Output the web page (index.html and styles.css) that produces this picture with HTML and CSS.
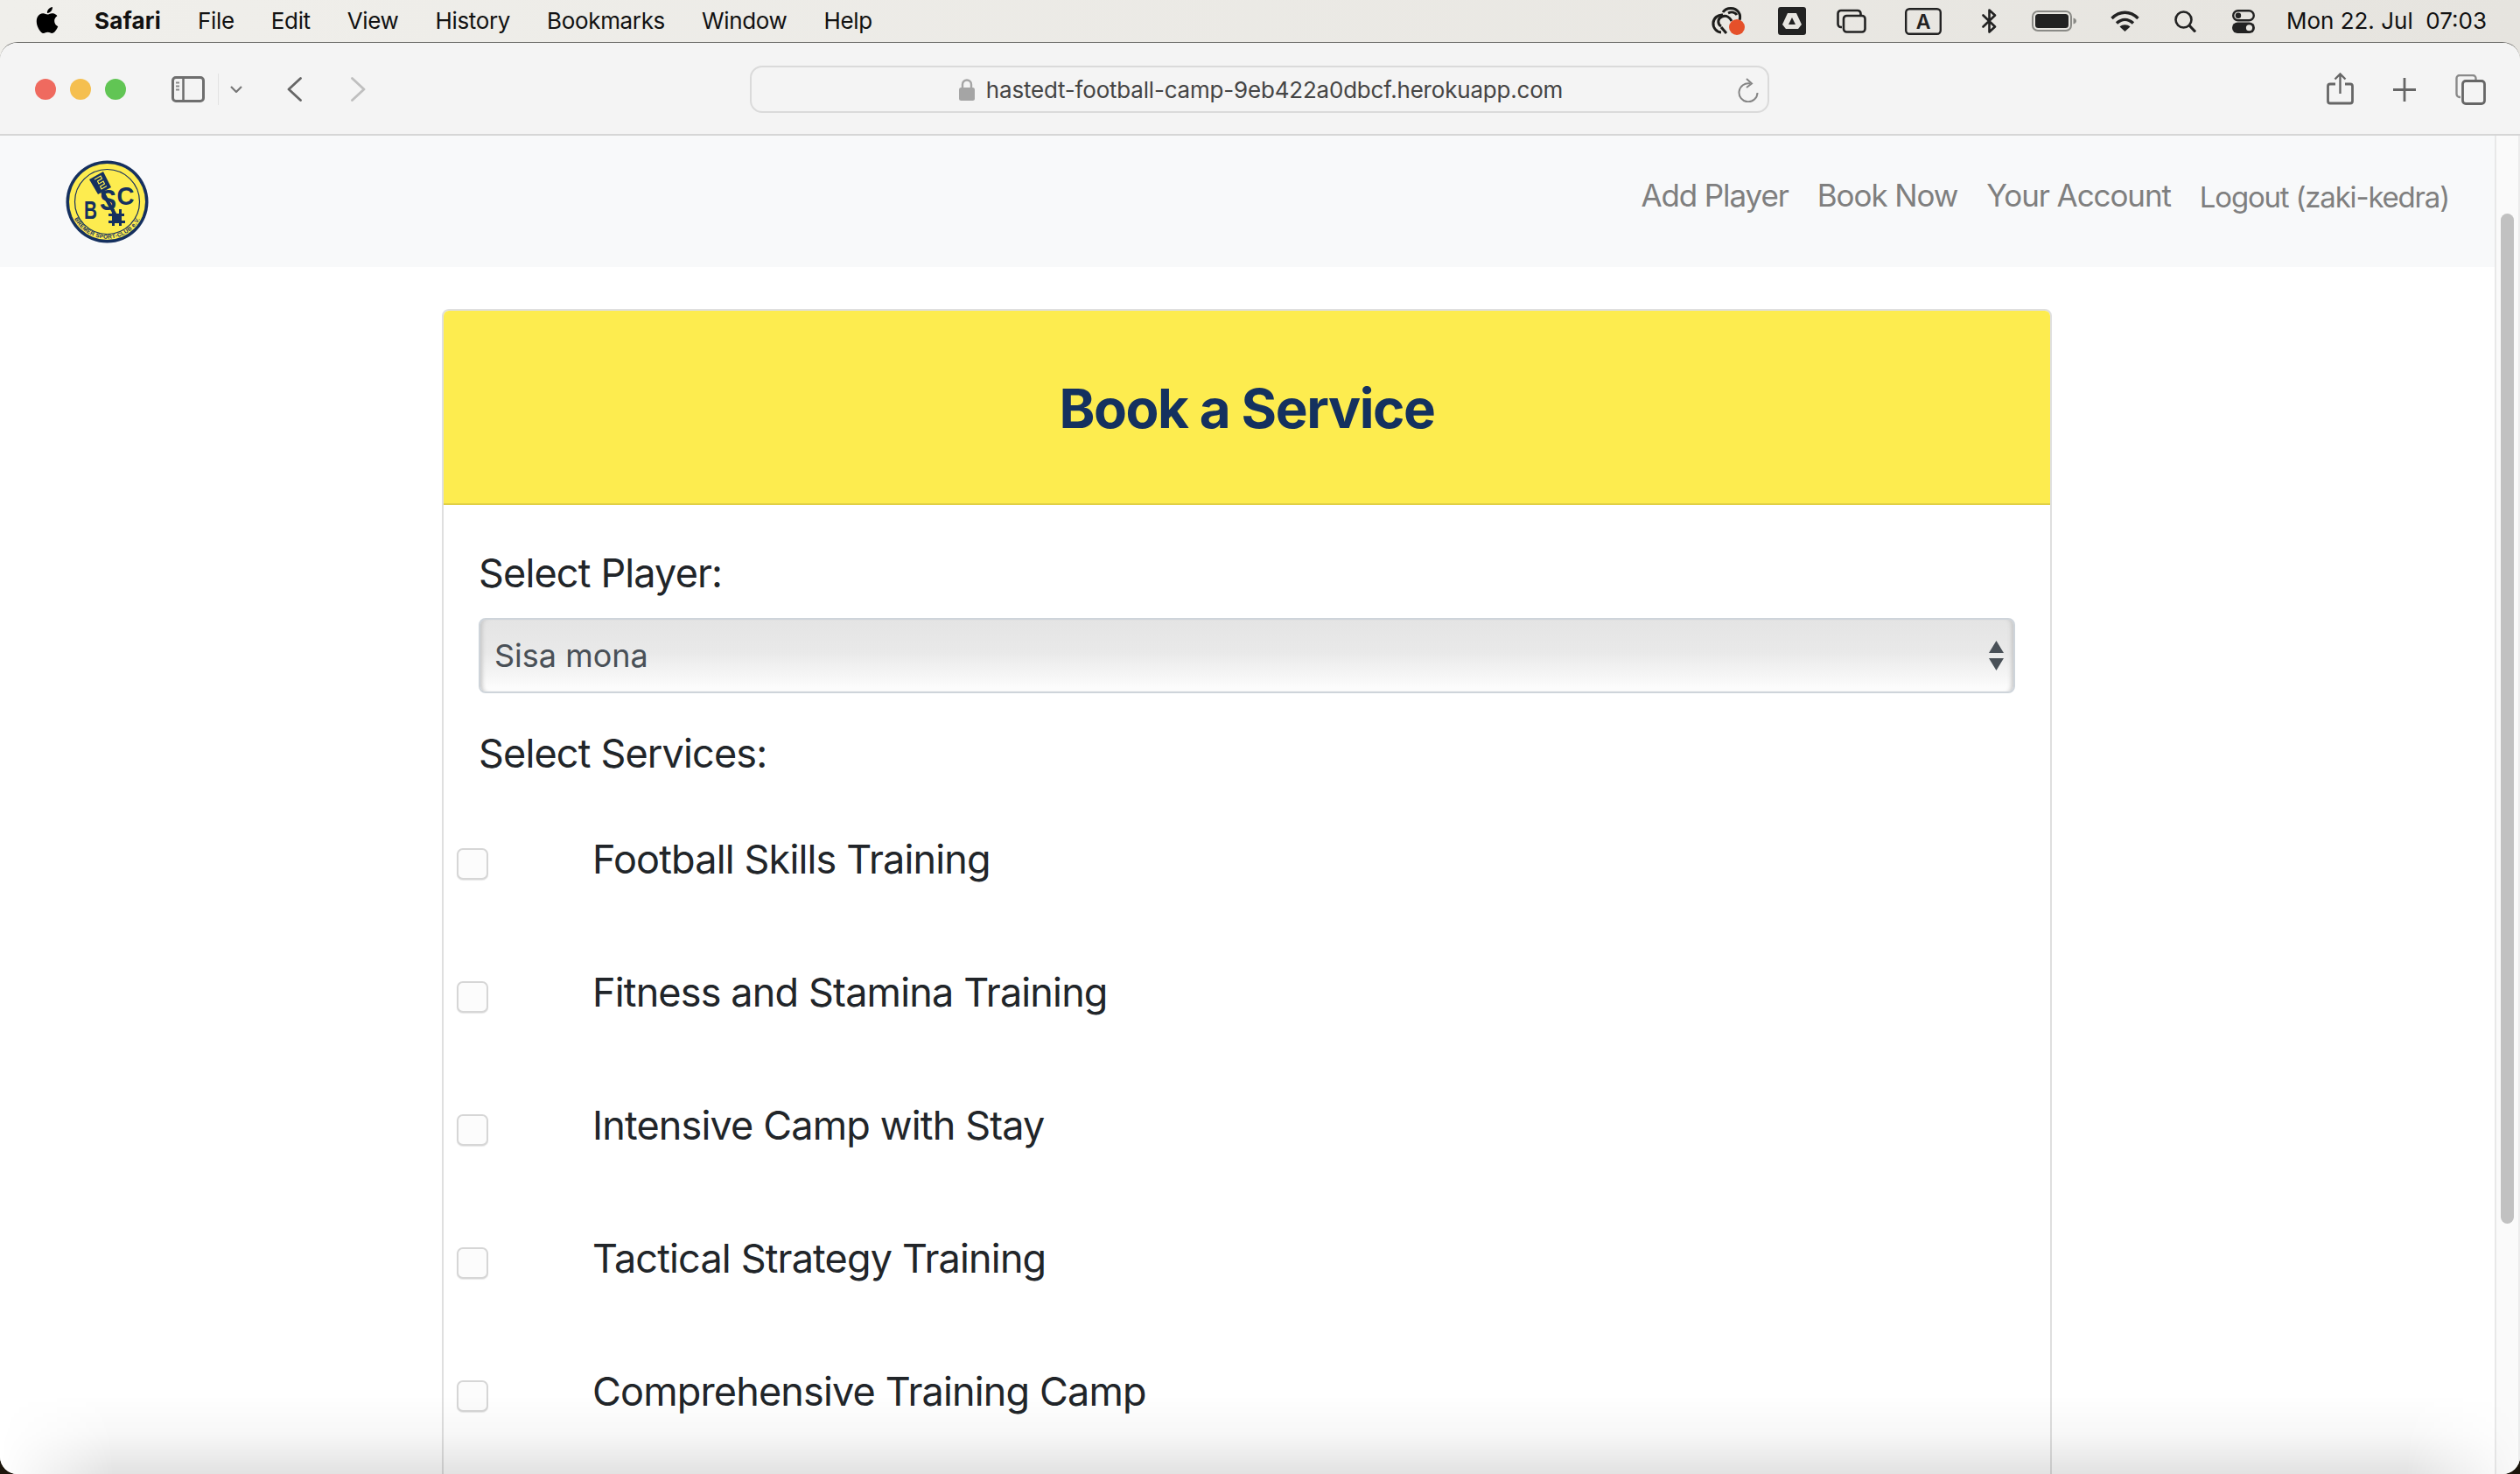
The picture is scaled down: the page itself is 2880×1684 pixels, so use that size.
FILE: index.html
```html
<!DOCTYPE html>
<html lang="en">
<head>
<meta charset="utf-8">
<title>Book a Service</title>
<link rel="stylesheet" href="styles.css">
</head>
<body>
<header class="menubar">
  <svg class="apple" viewBox="0 0 24 24"><path d="M12.152 6.896c-.948 0-2.415-1.078-3.96-1.04-2.04.027-3.91 1.183-4.961 3.014-2.117 3.675-.546 9.103 1.519 12.09 1.013 1.454 2.208 3.09 3.792 3.039 1.52-.065 2.09-.987 3.935-.987 1.831 0 2.35.987 3.96.948 1.637-.026 2.676-1.48 3.676-2.948 1.156-1.688 1.636-3.325 1.662-3.415-.039-.013-3.182-1.221-3.22-4.857-.026-3.04 2.48-4.494 2.597-4.559-1.429-2.09-3.623-2.324-4.39-2.376-2-.156-3.675 1.09-4.61 1.09zM15.53 3.83c.843-1.012 1.4-2.427 1.245-3.83-1.207.052-2.662.805-3.532 1.818-.78.896-1.454 2.338-1.273 3.714 1.338.104 2.715-.688 3.559-1.701"/></svg>
  <nav class="menu">
    <span class="menu-app">Safari</span>
    <span>File</span><span>Edit</span><span>View</span><span>History</span><span>Bookmarks</span><span>Window</span><span>Help</span>
  </nav>
  <div class="status">
    <svg class="st st-cc" viewBox="0 0 39 32"><g fill="none" stroke="#1d1d1b" stroke-width="3"><path d="M14 9a10 10 0 1 0-2 20"/><path d="M12 22a6 6 0 0 1 1-11c5-2 9 1 11 5"/><path d="M14 6c4-6 14-6 18 0 2 3 2 6 1 9"/><path d="M20 7c4-2 8-1 10 2"/><path d="M12 23l6 7"/></g><circle cx="30" cy="23" r="9" fill="#e5502a"/></svg>
    <svg class="st st-drive" viewBox="0 0 32 32"><rect width="32" height="32" rx="3" fill="#222"/><path d="M11 7h10l6 13-4 5H9l-4-5z" fill="#e8e6e1"/><path d="M16 12l4 8h-8z" fill="#222"/></svg>
    <svg class="st st-screens" viewBox="0 0 34 28"><g fill="none" stroke="#222" stroke-width="2.6"><path d="M6 21H5a3.500 3.500 0 0 1-3.500-3.500v-12A3.500 3.500 0 0 1 5 2h19a3.500 3.500 0 0 1 3.500 3.500V8"/><rect x="8" y="8" width="24.500" height="18.500" rx="3.500"/></g></svg>
    <svg class="st st-a" viewBox="0 0 42 31"><rect x="1.200" y="1.200" width="39.600" height="28.600" rx="4" fill="none" stroke="#222" stroke-width="2.400"/><text x="21" y="24" text-anchor="middle" class="st-a-text">A</text></svg>
    <svg class="st st-bt" viewBox="0 0 17 28"><path d="M1.500 7.500L15 20.500 8.500 26.500V1.500L15 7.500 1.500 20.500" fill="none" stroke="#222" stroke-width="2.600" stroke-linejoin="round" stroke-linecap="round"/></svg>
    <svg class="st st-batt" viewBox="0 0 51 24"><rect x="1" y="1" width="44" height="22" rx="6" fill="none" stroke="#8a8a86" stroke-width="2"/><rect x="4" y="4" width="38" height="16" rx="3.500" fill="#222"/><path d="M47.500 8.500c2 .5 3.500 1.500 3.500 3.500s-1.500 3-3.500 3.500z" fill="#8a8a86"/></svg>
    <svg class="st st-wifi" viewBox="0 0 33 24"><g fill="none" stroke="#222" stroke-width="3.400"><path d="M1.500 9c9-9 21-9 30 0"/><path d="M7 14.500c6-5.500 13-5.500 19 0"/></g><path d="M10.500 18.500c3.500-3 8.500-3 12 0L16.500 24z" fill="#222"/></svg>
    <svg class="st st-search" viewBox="0 0 25 25"><circle cx="10.500" cy="10.500" r="9" fill="none" stroke="#222" stroke-width="2.600"/><path d="M17 17l7 7.500" stroke="#222" stroke-width="3" fill="none"/></svg>
    <svg class="st st-cc2" viewBox="0 0 26 27"><rect x="1.200" y="1.200" width="23.600" height="11" rx="5.500" fill="none" stroke="#222" stroke-width="2.400"/><circle cx="7" cy="6.700" r="3.200" fill="#222"/><rect y="14.500" width="26" height="12.500" rx="6.250" fill="#222"/><circle cx="19.500" cy="20.750" r="3.600" fill="#e8e6e1"/></svg>
    <span class="clock">Mon 22. Jul&nbsp;&nbsp;07:03</span>
  </div>
</header>

<div class="window">
  <div class="toolbar">
    <div class="lights">
      <span class="light light-red"></span><span class="light light-yellow"></span><span class="light light-green"></span>
    </div>
    <svg class="tb-side" viewBox="0 0 38 30"><rect x="1.500" y="1.500" width="35" height="27" rx="3.500" fill="none" stroke="#6e6e6e" stroke-width="3"/><path d="M13.500 2v26" stroke="#6e6e6e" stroke-width="2.500"/><path d="M5 7.500h4M5 11.500h4M5 15.500h4" stroke="#8a8a8a" stroke-width="2"/></svg>
    <span class="tb-divider"></span>
    <svg class="tb-caret" viewBox="0 0 14 8"><path d="M1 1l6 6 6-6" fill="none" stroke="#777" stroke-width="2.200"/></svg>
    <svg class="tb-back" viewBox="0 0 17 28"><path d="M15.500 1.500L2 14l13.500 12.500" fill="none" stroke="#666" stroke-width="2.800" stroke-linecap="round" stroke-linejoin="round"/></svg>
    <svg class="tb-forward" viewBox="0 0 17 28"><path d="M1.500 1.500L15 14 1.500 26.500" fill="none" stroke="#bfbfbf" stroke-width="2.800" stroke-linecap="round" stroke-linejoin="round"/></svg>
    <div class="urlbar">
      <svg class="lock" viewBox="0 0 18 25"><path d="M4 11V6.500a5 5 0 0 1 10 0V11" fill="none" stroke="#a5a5a5" stroke-width="2.400"/><rect y="10" width="18" height="15" rx="2.500" fill="#a5a5a5"/></svg>
      <span class="url">hastedt-football-camp-9eb422a0dbcf.herokuapp.com</span>
      <svg class="reload" viewBox="0 0 24 28"><path d="M14 6.500A10.500 10.500 0 1 0 22.500 17" fill="none" stroke="#858585" stroke-width="2"/><path d="M10 1l6 5.500-6 4.500" fill="none" stroke="#858585" stroke-width="2"/></svg>
    </div>
    <svg class="tb-share" viewBox="0 0 31 37"><path d="M10 13H4a2.500 2.500 0 0 0-2.500 2.500v17A2.500 2.500 0 0 0 4 35h23a2.500 2.500 0 0 0 2.500-2.500v-17A2.500 2.500 0 0 0 27 13h-6" fill="none" stroke="#666" stroke-width="2.800"/><path d="M15.500 24V2M9.500 7.500l6-6 6 6" fill="none" stroke="#666" stroke-width="2.400"/></svg>
    <svg class="tb-plus" viewBox="0 0 26 27"><path d="M13 0v27M0 13.500h26" stroke="#666" stroke-width="2.800"/></svg>
    <svg class="tb-tabs" viewBox="0 0 35 35"><path d="M6 26H5a3.500 3.500 0 0 1-3.500-3.500v-18A3.500 3.500 0 0 1 5 1h15a3.500 3.500 0 0 1 3.500 3.500V7" fill="none" stroke="#8a8a8a" stroke-width="2.400"/><rect x="8.500" y="7.500" width="25" height="26" rx="3.500" fill="none" stroke="#666" stroke-width="2.800"/></svg>
  </div>

  <div class="viewport">
    <main class="page">
      <nav class="navbar">
        <svg class="logo" viewBox="0 0 95 95">
          <circle cx="47.500" cy="47.500" r="47" fill="#15305f"/>
          <circle cx="47.500" cy="47.500" r="43.500" fill="#fdec4f"/>
          <circle cx="47.500" cy="47.500" r="37" fill="none" stroke="#15305f" stroke-width="1.200"/>
          <path d="M27 22L43 13 52 31 37 39z" fill="#15305f"/>
          <path d="M33 22l7-4 1.500 3-5 3 1.500 3 5-3 1.500 3-5 3 1.500 3 6-3.500" fill="none" stroke="#fdec4f" stroke-width="1.200"/>
          <path d="M42 36l15 27" stroke="#15305f" stroke-width="4"/>
          <path d="M53 56h3v5h5v-5h3v5h3v3h-3v5h4v3h-4v3h-3v-3h-5v3h-3v-3h-4v-3h4v-5h-4v-3h4z" fill="#15305f"/>
          <text class="logo-letter" x="21" y="67" textLength="15" lengthAdjust="spacingAndGlyphs">B</text>
          <text class="logo-letter logo-s" x="39" y="57" textLength="19" lengthAdjust="spacingAndGlyphs">S</text>
          <text class="logo-letter" x="58.500" y="51" textLength="20" lengthAdjust="spacingAndGlyphs">C</text>
          <defs><path id="logo-arc" d="M7 60A42.500 42.500 0 0 0 88 60"/></defs>
          <text class="logo-ring"><textPath href="#logo-arc" startOffset="50%" text-anchor="middle">BREMER SPORT-CLUB e.V.</textPath></text>
        </svg>
        <div class="nav-links">
          <a class="nav-link">Add Player</a>
          <a class="nav-link">Book Now</a>
          <a class="nav-link">Your Account</a>
          <a class="nav-link nav-logout">Logout (zaki-kedra)</a>
        </div>
      </nav>

      <section class="card">
        <h1 class="card-header">Book a Service</h1>
        <form class="card-body">
          <label class="field-label" for="player">Select Player:</label>
          <div class="select-wrap">
            <select class="select" id="player"><option>Sisa mona</option></select>
            <svg class="select-arrows" viewBox="0 0 17 34"><path d="M8.500 0L17 14H0zM0 20h17L8.500 34z"/></svg>
          </div>
          <p class="field-label services-label">Select Services:</p>
          <ul class="services">
            <li class="service"><input class="check" type="checkbox" id="s1"><label for="s1">Football Skills Training</label></li>
            <li class="service"><input class="check" type="checkbox" id="s2"><label for="s2">Fitness and Stamina Training</label></li>
            <li class="service"><input class="check" type="checkbox" id="s3"><label for="s3">Intensive Camp with Stay</label></li>
            <li class="service"><input class="check" type="checkbox" id="s4"><label for="s4">Tactical Strategy Training</label></li>
            <li class="service"><input class="check" type="checkbox" id="s5"><label for="s5">Comprehensive Training Camp</label></li>
          </ul>
        </form>
      </section>
    </main>
    <aside class="scrolltrack"><span class="scrollthumb"></span></aside>
  </div>
  <div class="bottom-shade"></div>
</div>
</body>
</html>
```

FILE: styles.css
```css
* { box-sizing: border-box; }
html, body { margin: 0; height: 1684px; overflow: hidden; }
body {
  background: #1c160c;
  font-family: Inter, "Noto Sans", sans-serif;
  color: #212529;
  position: relative;
}

/* macOS menu bar */
.menubar {
  height: 68px;
  margin-bottom: -20px;
  padding: 0 38px 20px 39px;
  display: flex;
  align-items: center;
  background: linear-gradient(90deg, #f0efeb, #e6e4df);
  font-size: 26px;
  color: #111;
}
.apple { width: 30px; height: 32px; flex: none; margin-top: -3px; }
.menu { display: flex; gap: 42px; margin-left: 39px; line-height: 48px; letter-spacing: -0.35px; }
.menu-app { font-weight: 700; letter-spacing: 0.2px; }
.status { margin-left: auto; display: flex; align-items: center; height: 48px; }
.st { display: block; flex: none; }
.st-cc { width: 39px; height: 32px; }
.st-drive { width: 32px; height: 32px; margin-left: 38px; }
.st-screens { width: 34px; height: 28px; margin-left: 35px; }
.st-a { width: 42px; height: 31px; margin-left: 44px; }
.st-a-text { font: 600 23px Inter, sans-serif; fill: #222; }
.st-bt { width: 17px; height: 28px; margin-left: 46px; }
.st-batt { width: 51px; height: 24px; margin-left: 40px; }
.st-wifi { width: 33px; height: 24px; margin-left: 39px; }
.st-search { width: 25px; height: 25px; margin-left: 40px; }
.st-cc2 { width: 26px; height: 27px; margin-left: 41px; }
.clock { margin-left: 36px; line-height: 48px; letter-spacing: 0; white-space: nowrap; }

/* window */
.window {
  position: relative;
  height: 1636px;
  border-radius: 20px;
  overflow: hidden;
  background: #fff;
  border-top: 1px solid #6f6f6c;
  display: flex;
  flex-direction: column;
}
.toolbar {
  height: 106px;
  flex: none;
  background: #f4f4f4;
  border-bottom: 2px solid #d6d6d6;
  display: flex;
  align-items: center;
  padding: 2px 39px 0 40px;
  position: relative;
}
.lights { display: flex; gap: 16px; }
.light { width: 24px; height: 24px; border-radius: 50%; }
.light-red { background: #ef6a5f; }
.light-yellow { background: #f5bf4f; }
.light-green { background: #61c554; }
.tb-side { width: 38px; height: 30px; margin-left: 52px; flex: none; }
.tb-divider { width: 1px; height: 36px; background: #e2e2e2; margin-left: 15px; }
.tb-caret { width: 14px; height: 8px; margin-left: 13px; flex: none; }
.tb-back { width: 17px; height: 28px; margin-left: 51px; flex: none; }
.tb-forward { width: 17px; height: 28px; margin-left: 56px; flex: none; }
.urlbar {
  width: 1165px;
  height: 54px;
  margin-left: 439px;
  padding-left: 3px;
  border: 2px solid #dadada;
  border-radius: 14px;
  flex: none;
  display: flex;
  align-items: center;
  justify-content: center;
  position: relative;
  font-size: 26px;
  color: #444;
}
.lock { width: 18px; height: 25px; margin-right: 13px; flex: none; }
.url { letter-spacing: -0.2px; }
.reload { position: absolute; right: 10px; top: 12px; width: 24px; height: 28px; }
.tb-share { width: 31px; height: 37px; margin-left: 637px; margin-top: -2px; flex: none; }
.tb-plus { width: 26px; height: 27px; margin-left: 45px; flex: none; }
.tb-tabs { width: 35px; height: 35px; margin-left: 45px; flex: none; }

/* page viewport */
.viewport { flex: 1; display: flex; min-height: 0; }
.page { flex: 1; min-width: 0; background: #fff; }
.scrolltrack {
  width: 29px;
  flex: none;
  background: #fafafa;
  border-left: 2px solid #e8e8e8;
  border-right: 2px solid #ececec;
  padding: 89px 5px 0 5px;
}
.scrollthumb { display: block; height: 1154px; border-radius: 8px; background: #c1c1c1; }

.navbar {
  height: 150px;
  background: #f8f9fa;
  display: flex;
  align-items: center;
  padding: 0 52px 0 75px;
}
.logo { width: 95px; height: 95px; flex: none; }
.logo-letter { font: 700 30px "Liberation Sans", sans-serif; fill: #15305f; }
.logo-s { font-size: 34px; }
.logo-ring { font: 700 6.500px "Liberation Sans", sans-serif; fill: #15305f; letter-spacing: .3px; }
.nav-links { margin-left: auto; display: flex; align-items: baseline; gap: 33px; margin-top: -14px; }
.nav-link { font-size: 35px; color: #7f7f7f; letter-spacing: -1.1px; white-space: nowrap; }
.nav-logout { font-size: 33px; letter-spacing: -1.2px; position: relative; top: 1px; }

.card {
  width: 1840px;
  margin: 48px 0 0 505px;
  border: 2px solid #dfdfdf;
  border-radius: 8px;
}
.card-header {
  margin: 0;
  height: 222px;
  padding-top: 3px;
  background: #fdec4f;
  border-bottom: 2px solid #e0cf45;
  border-radius: 6px 6px 0 0;
  display: flex;
  align-items: center;
  justify-content: center;
  font-size: 62px;
  font-weight: 700;
  color: #14315f;
  letter-spacing: -1.45px;
}
.card-body { padding: 51px 40px 40px; }
.field-label { display: block; margin: 0; font-size: 45px; line-height: 54px; letter-spacing: -0.85px; }
.select-wrap { position: relative; margin-top: 24px; }
.select {
  display: block;
  width: 100%;
  height: 86px;
  appearance: none;
  -webkit-appearance: none;
  border: 2px solid #ced4da;
  border-radius: 8px;
  padding: 0 16px;
  background: linear-gradient(#e4e4e4, #e9e9e9 45%, #fcfcfc 95%);
  box-shadow: inset 6px 0 5px -4px #c4c4c4, inset -6px 0 5px -4px #c4c4c4;
  font: 36px Inter, sans-serif;
  letter-spacing: 0;
  color: #495057;
}
.select-arrows { position: absolute; right: 13px; top: 26px; width: 17px; height: 34px; fill: #495057; }
.services-label { margin-top: 42px; }
.services { list-style: none; margin: 49px 0 0; padding: 0; }
.service {
  height: 152px;
  display: flex;
  align-items: flex-start;
  margin-left: -25px;
}
.check {
  appearance: none;
  -webkit-appearance: none;
  width: 36px;
  height: 36px;
  margin: 32px 0 0;
  flex: none;
  border: 2px solid #d6d6d6;
  border-radius: 7px;
  background: #fcfcfc;
  box-shadow: 0 1px 1px #e8e8e8;
}
.service label { margin-left: 119px; margin-top: 18px; font-size: 45px; line-height: 54px; letter-spacing: -0.85px; }

.bottom-shade {
  position: absolute;
  left: 0;
  right: 0;
  bottom: 0;
  height: 90px;
  background: linear-gradient(to top, rgba(0,0,0,.115), rgba(0,0,0,.03) 50%, transparent);
  -webkit-mask-image: linear-gradient(90deg, transparent 0, #000 130px, #000 calc(100% - 130px), transparent 100%);
  mask-image: linear-gradient(90deg, transparent 0, #000 130px, #000 calc(100% - 130px), transparent 100%);
  pointer-events: none;
}
```
